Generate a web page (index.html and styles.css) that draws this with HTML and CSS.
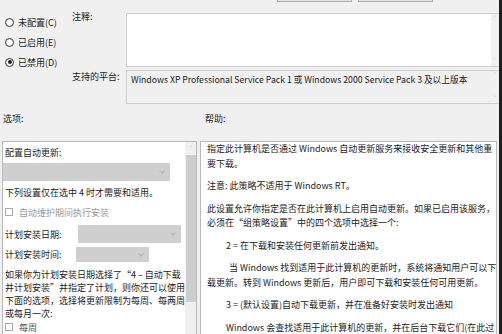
FILE: index.html
```html
<!DOCTYPE html>
<html lang="zh-CN">
<head>
	<meta charset="utf-8">
	<title>配置自动更新</title>
	<link rel="stylesheet" href="styles.css">
</head>
<body>
	<div class="page">
		<div class="dialog">
			<div class="btn-row">
				<span class="btn"></span>
				<span class="btn"></span>
			</div>

			<div class="settings">
				<div class="states">
					<label class="radio"><i></i>未配置(C)</label>
					<label class="radio"><i></i>已启用(E)</label>
					<label class="radio on"><i></i>已禁用(D)</label>
				</div>
				<div class="field-label note-label">注释:</div>
				<div class="box note-box"><div class="strip"><b>&#708;</b><b>&#709;</b></div></div>
				<div class="field-label plat-label">支持的平台:</div>
				<div class="box plat-box">
					<span class="plat-text">Windows XP Professional Service Pack 1 或 Windows 2000 Service Pack 3 及以上版本</span>
					<div class="strip"><b>&#708;</b><b>&#709;</b></div>
				</div>
			</div>

			<div class="lower">
				<div class="sec-label opt-label">选项:</div>
				<div class="sec-label help-label">帮助:</div>

				<div class="panel options">
					<div class="opt-body">
						<div class="line">配置自动更新:</div>
						<div class="select wide"></div>
						<div class="line gap5">下列设置仅在选中 4 时才需要和适用。</div>
						<div class="check dim gap5"><i></i>自动维护期间执行安装</div>
						<div class="row date-row">
							<span>计划安装日期:</span>
							<div class="select date"></div>
						</div>
						<div class="row time-row">
							<span>计划安装时间:</span>
							<div class="select time"></div>
						</div>
						<p class="opt-text">如果你为计划安装日期选择了“4 – 自动下载<br>并计划安装”并指定了计划，则你还可以使用<br>下面的选项，选择将更新限制为每周、每两周<br>或每月一次:</p>
						<div class="check week"><i></i>每周</div>
					</div>
					<div class="vscroll">
						<span class="arrow-up">&#708;</span>
						<span class="thumb"></span>
					</div>
				</div>

				<div class="panel help">
					<p>指定此计算机是否通过 Windows 自动更新服务来接收安全更新和其他重<br>要下载。</p>
					<p>注意: 此策略不适用于 Windows RT。</p>
					<p>此设置允许你指定是否在此计算机上启用自动更新。如果已启用该服务，<br>必须在“组策略设置”中的四个选项中选择一个:</p>
					<p class="ind">2 = 在下载和安装任何更新前发出通知。</p>
					<p class="ind wide-ind">当 Windows 找到适用于此计算机的更新时，系统将通知用户可以下<br>载更新。转到 Windows 更新后，用户即可下载和安装任何可用更新。</p>
					<p class="ind">3 = (默认设置)自动下载更新，并在准备好安装时发出通知</p>
					<p class="ind">Windows 会查找适用于此计算机的更新，并在后台下载它们(在此过<br>程中，用户不会收到通知或以其他方式受到打扰)。下载完成后，系统将通知用户</p>
				</div>
			</div>
		</div>
		<div class="edge"></div>
	</div>
</body>
</html>
```

FILE: styles.css
```css
* {
	margin: 0;
	padding: 0;
	box-sizing: border-box;
}
html, body {
	width: 502px;
	height: 334px;
	overflow: hidden;
}
body {
	background: #f0f0f0;
	color: #222;
	font-family: "Noto Sans CJK SC", "Noto Sans", sans-serif;
	font-size: 9px;
}
.page {
	display: flex;
	height: 334px;
}
.dialog {
	width: 499px;
}
.edge {
	flex: 1;
	background: #1e1e1e;
}

/* 顶部按钮 (只露出底边) */
.btn-row {
	display: flex;
	gap: 6px;
	height: 2px;
	padding-left: 277px;
	overflow: visible;
}
.btn {
	display: block;
	width: 75px;
	height: 10px;
	margin-top: -8px;
	border: 1px solid #adadad;
	background: #e1e1e1;
}

/* 状态 + 注释 + 平台 */
.settings {
	display: grid;
	grid-template-columns: 72px 54px 1fr;
	grid-template-rows: 54px 34px;
	row-gap: 3px;
	margin-top: 11px;
}
.states {
	grid-row: 1 / 3;
	grid-column: 1;
	padding-left: 5px;
	margin-top: -1px;
}
.radio {
	display: flex;
	align-items: center;
	gap: 4px;
	height: 20px;
}
.radio i {
	position: relative;
	width: 9px;
	height: 9px;
	border: 1px solid #333;
	border-radius: 50%;
	background: #fff;
}
.radio.on i::after {
	content: "";
	position: absolute;
	left: 1.5px;
	top: 1.5px;
	width: 4px;
	height: 4px;
	border-radius: 50%;
	background: #222;
}
.field-label {
	grid-column: 2;
	line-height: 12px;
}
.note-label {
	grid-row: 1;
	margin-top: -2px;
}
.plat-label {
	grid-row: 2;
	margin-top: 1px;
}
.box {
	grid-column: 3;
	display: flex;
	border: 1px solid #cfcfcf;
	border-right: none;
}
.note-box {
	grid-row: 1;
	background: #fff;
	justify-content: flex-end;
}
.plat-box {
	grid-row: 2;
	background: #f0f0f0;
}
.plat-text {
	flex: 1;
	padding: 3px 0 0 4px;
	font-size: 8.7px;
	line-height: 12px;
}
.strip {
	display: flex;
	flex-direction: column;
	justify-content: space-between;
	width: 8px;
	background: #f0f0f0;
	color: #b5b5b5;
	font-size: 7px;
	line-height: 9px;
	text-align: center;
}
.strip b {
	font-weight: normal;
}

/* 下半部分 */
.lower {
	display: grid;
	grid-template-columns: 195px 297px;
	grid-template-rows: 37px 200px;
	column-gap: 3px;
	padding-left: 2px;
}
.sec-label {
	padding-top: 9px;
	line-height: 12px;
}
.opt-label {
	padding-left: 1px;
}
.help-label {
	padding-left: 5px;
}
.panel {
	border: 1px solid #b9b9b9;
	background: #fff;
}

/* 选项 */
.options {
	display: flex;
}
.opt-body {
	flex: 1;
	padding-top: 4px;
}
.line {
	padding-left: 2px;
	line-height: 14px;
}
.gap5 {
	margin-top: 5px;
}
.select {
	position: relative;
	background: #cfcfcf;
}
.select::after {
	content: "";
	position: absolute;
	right: 6px;
	top: 50%;
	width: 3px;
	height: 3px;
	margin-top: -3px;
	border-right: 1px solid #b3b3b3;
	border-bottom: 1px solid #b3b3b3;
	transform: rotate(45deg);
}
.wide {
	width: 167px;
	height: 18px;
	margin-top: 3px;
}
.check {
	display: flex;
	align-items: center;
	gap: 6px;
	height: 14px;
	padding-left: 2px;
}
.check i {
	width: 8px;
	height: 8px;
	border: 1px solid #a9a9a9;
	background: #fff;
}
.dim {
	color: #9a9a9a;
}
.row {
	display: flex;
	align-items: center;
	padding-left: 2px;
}
.date-row {
	height: 18px;
	margin-top: 6px;
}
.date-row .select {
	width: 103px;
	height: 18px;
	margin-left: 16px;
}
.time-row {
	height: 15px;
	margin-top: 4px;
}
.time-row .select {
	width: 73px;
	height: 15px;
	margin-left: 14px;
}
.opt-text {
	margin-top: 6px;
	padding-left: 2px;
	line-height: 13px;
	white-space: nowrap;
}
.week {
	margin-top: 0;
	color: #555;
}
.vscroll {
	position: relative;
	width: 12px;
	background: #f0f0f0;
}
.arrow-up {
	position: absolute;
	top: 2px;
	left: 0;
	width: 12px;
	color: #777;
	font-size: 7px;
	line-height: 9px;
	text-align: center;
}
.thumb {
	position: absolute;
	top: 13px;
	left: 1px;
	width: 10px;
	height: 147px;
	background: #cdcdcd;
}

/* 帮助 */
.help {
	padding: 0 3px 0 6px;
	line-height: 14.5px;
	white-space: nowrap;
	overflow: hidden;
}
.help p {
	margin-bottom: 8px;
}
.help .ind {
	text-indent: 19px;
}
.help .wide-ind {
	text-indent: 22px;
}
```
